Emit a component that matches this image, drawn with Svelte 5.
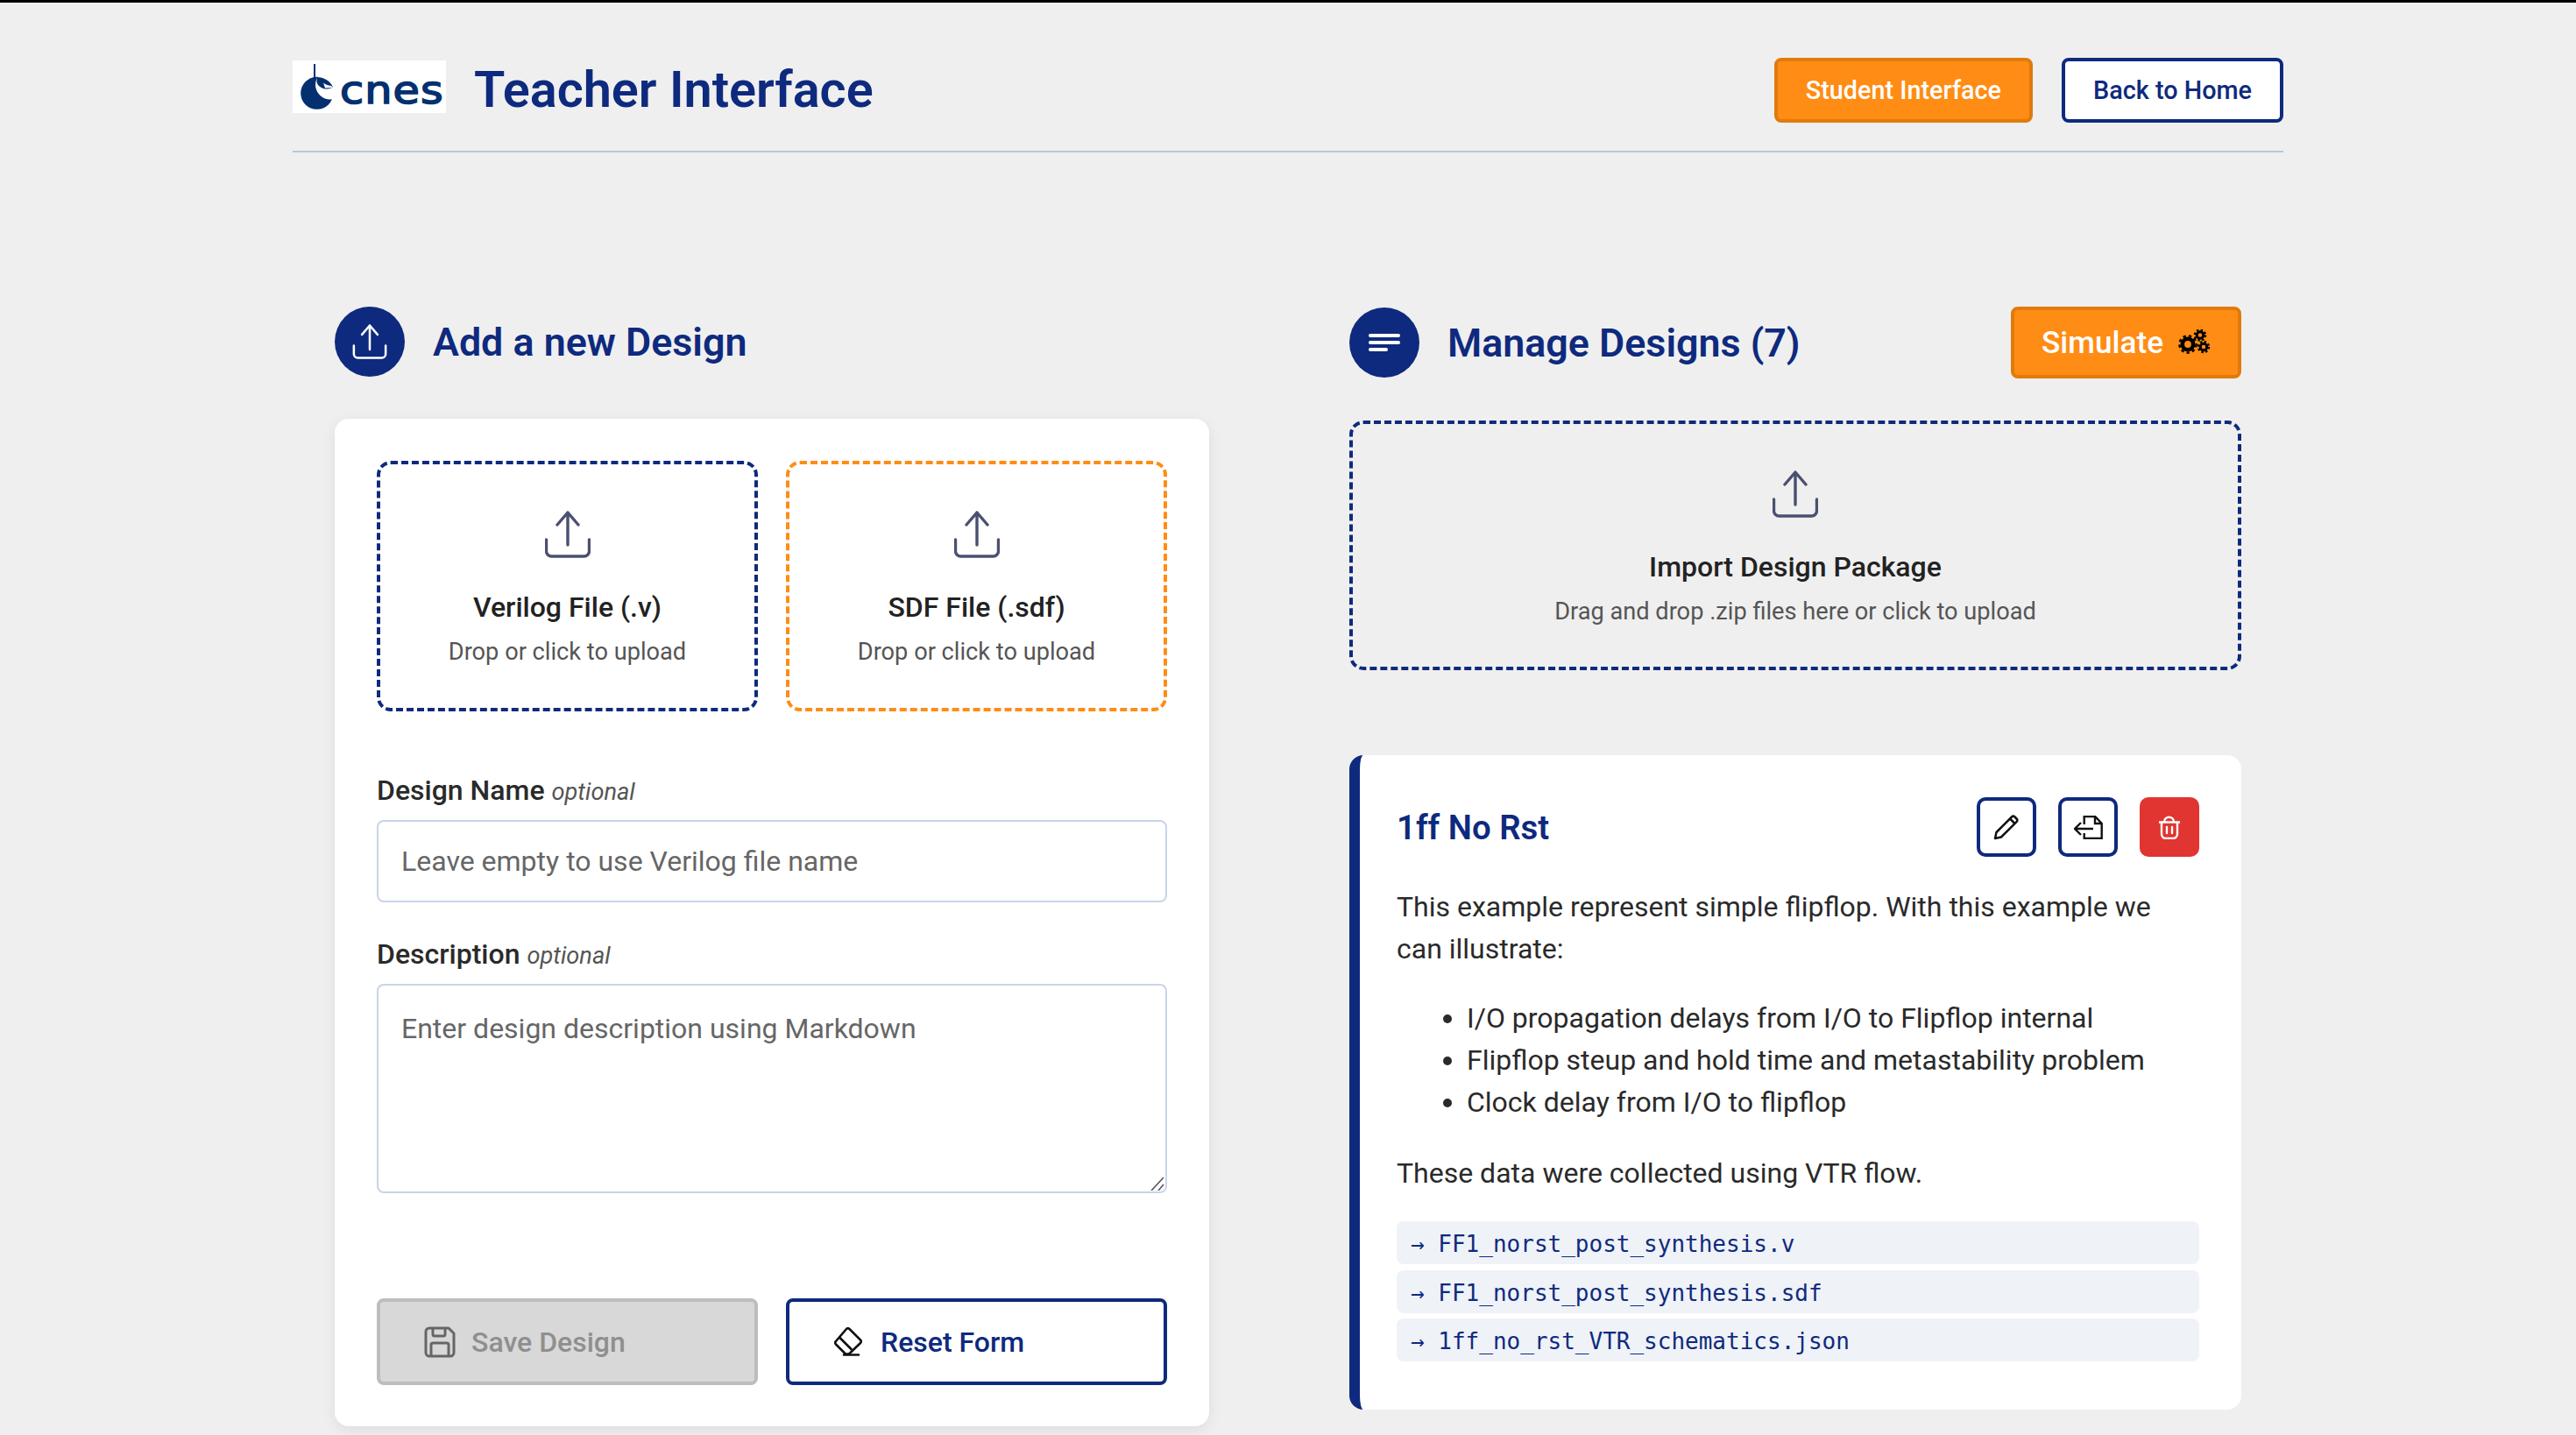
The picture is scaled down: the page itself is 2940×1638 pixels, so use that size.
<script>
  const gears = [
    { cx: 12, cy: 17, r: 6.2, sw: 4.6, tr: 9.6, dash: '3.4 3.15' },
    { cx: 26, cy: 6.5, r: 3.8, sw: 3, tr: 6, dash: '2.4 2.3' },
    { cx: 30, cy: 20, r: 3.8, sw: 3, tr: 6, dash: '2.4 2.3' }
  ];
  const files = ['FF1_norst_post_synthesis.v', 'FF1_norst_post_synthesis.sdf', '1ff_no_rst_VTR_schematics.json'];
  const points = [
    'I/O propagation delays from I/O to Flipflop internal',
    'Flipflop steup and hold time and metastability problem',
    'Clock delay from I/O to flipflop'
  ];
</script>

{#snippet upload(cls)}
  <svg class={cls} viewBox="0 0 52 54" fill="none" stroke="currentColor" stroke-width="3.4" stroke-linecap="round" stroke-linejoin="round">
    <path d="M1.5 33v13a6 6 0 0 0 6 6h37a6 6 0 0 0 6-6V33" />
    <path d="M26 2v37M14 16 26 2l12 14" />
  </svg>
{/snippet}

<div class="page">
  <header class="top">
    <div class="brand">
      <div class="logo">
        <svg class="mark" viewBox="0 0 50 60">
          <circle cx="27.7" cy="37.3" r="18.5" fill="#04306f" />
          <circle cx="42.7" cy="27.7" r="16.7" fill="#fff" />
          <path d="M27.5 19c8 0 15 4 18.500 11.500-4 2.300-8 2.500-11 1.500-4-1.500-7-4-7.500-8z" fill="#04306f" />
          <path d="M35 25.500c2 1.800 5 3 9 3.500l2 2-9 .5z" fill="#fff" />
          <rect x="24" y="4" width="2" height="34" fill="#04306f" />
        </svg>
        <span class="wordmark">cnes</span>
      </div>
      <h1>Teacher Interface</h1>
    </div>
    <nav class="top-actions">
      <button class="btn orange">Student Interface</button>
      <button class="btn outline">Back to Home</button>
    </nav>
  </header>

  <main class="columns">
    <section class="left">
      <div class="section-head">
        <span class="circle">{@render upload('circle-upload')}</span>
        <h2>Add a new Design</h2>
      </div>
      <form class="card">
        <div class="zones">
          <div class="zone navy">
            {@render upload('zone-icon')}
            <strong>Verilog File (.v)</strong>
            <span>Drop or click to upload</span>
          </div>
          <div class="zone amber">
            {@render upload('zone-icon')}
            <strong>SDF File (.sdf)</strong>
            <span>Drop or click to upload</span>
          </div>
        </div>

        <label class="field-label first" for="name">Design Name <em>optional</em></label>
        <input id="name" type="text" placeholder="Leave empty to use Verilog file name" />

        <label class="field-label second" for="desc">Description <em>optional</em></label>
        <div class="area-wrap">
          <textarea id="desc" placeholder="Enter design description using Markdown"></textarea>
          <svg class="grip" viewBox="0 0 16 16" fill="none" stroke="#555" stroke-width="1.600">
            <path d="M1 16 15 1M9 16l6-7" />
          </svg>
        </div>

        <div class="form-actions">
          <button type="button" class="form-btn save">
            <svg class="save-icon" viewBox="0 0 36 36" fill="none" stroke="#666" stroke-width="3" stroke-linejoin="round">
              <path d="M2 6a4 4 0 0 1 4-4h22l6 6v22a4 4 0 0 1-4 4H6a4 4 0 0 1-4-4z" />
              <path d="M10 2v7a2 2 0 0 0 2 2h10a2 2 0 0 0 2-2V2M8 34V21a2 2 0 0 1 2-2h16a2 2 0 0 1 2 2v13" />
            </svg>
            Save Design
          </button>
          <button type="button" class="form-btn reset">
            <svg class="reset-icon" viewBox="0 0 32 33" fill="none" stroke="#111" stroke-width="2.600" stroke-linejoin="round" stroke-linecap="round">
              <path d="M17.500 2 30 14.500a2.500 2.500 0 0 1 0 3.500L17 30.500H13L2 19.500a2.500 2.500 0 0 1 0-3.500L14 2a2.500 2.500 0 0 1 3.500 0z" />
              <path d="M6.500 12 19.500 25M11 31.500h17" />
            </svg>
            Reset Form
          </button>
        </div>
      </form>
    </section>

    <section class="right">
      <div class="section-head manage">
        <span class="circle">
          <svg class="lines" viewBox="0 0 36 20" fill="none" stroke="#fff" stroke-width="4" stroke-linecap="round">
            <path d="M2 2h32M2 10h32M2 18h18" />
          </svg>
        </span>
        <h2>Manage Designs (7)</h2>
        <button class="btn orange simulate">
          Simulate
          <svg class="gears" viewBox="0 0 38 30">
            {#each gears as g}
              <circle cx={g.cx} cy={g.cy} r={g.r} fill="none" stroke="#000" stroke-width={g.sw} />
              <circle cx={g.cx} cy={g.cy} r={g.tr} fill="none" stroke="#000" stroke-width="2.400" stroke-dasharray={g.dash} />
            {/each}
          </svg>
        </button>
      </div>

      <div class="zone navy import">
        {@render upload('zone-icon')}
        <strong>Import Design Package</strong>
        <span>Drag and drop .zip files here or click to upload</span>
      </div>

      <article class="design">
        <div class="design-head">
          <h3>1ff No Rst</h3>
          <div class="icon-btns">
            <button class="icon-btn" aria-label="Edit">
              <svg class="i-pencil" viewBox="0 0 30 30" fill="none" stroke="#111" stroke-width="2.500" stroke-linejoin="round">
                <path d="M2 28l1.500-7L21 3.500a2.500 2.500 0 0 1 3.500 0l2 2a2.500 2.500 0 0 1 0 3.500L9 26.500z" />
                <path d="M19 5.500 24.500 11" />
              </svg>
            </button>
            <button class="icon-btn" aria-label="Export">
              <svg class="i-file" viewBox="0 0 33 27" fill="none" stroke="#111" stroke-width="2.400">
                <path d="M11.700 10V1h12.500l7.500 8v17H11.700v-6M24 1v8h7.700" />
                <path d="M22 15H1M8 8l-7 7 7 7" />
              </svg>
            </button>
            <button class="icon-btn danger" aria-label="Delete">
              <svg class="i-trash" viewBox="0 0 24 27" fill="none" stroke="#fff" stroke-width="2.400" stroke-linecap="round">
                <path d="M0 7.500h24M6 7c0-7 11-7 11 0M3 7.500V21a5 5 0 0 0 5 5h8a5 5 0 0 0 5-5V7.500M9 13v7M15 13v7" />
              </svg>
            </button>
          </div>
        </div>
        <p>This example represent simple flipflop. With this example we can illustrate:</p>
        <ul>
          {#each points as point}
            <li>{point}</li>
          {/each}
        </ul>
        <p>These data were collected using VTR flow.</p>
        <div class="files">
          {#each files as file}
            <div class="file">→ {file}</div>
          {/each}
        </div>
      </article>
    </section>
  </main>
</div>

<style>
  :global(html), :global(body) {
    margin: 0;
    height: 1638px;
    overflow: hidden;
    background: #efefef;
  }
  .page {
    --navy: #0e2a7e;
    --orange: #ff8c14;
    box-sizing: border-box;
    height: 1638px;
    border-top: 3px solid #000;
    font-family: Roboto, "Liberation Sans", sans-serif;
    color: #2a2a2a;
  }
  .top {
    box-sizing: border-box;
    width: 2272px;
    margin: 0 auto;
    padding: 63px 0 32px;
    display: flex;
    align-items: center;
    justify-content: space-between;
    border-bottom: 2px solid #b8c4dc;
  }
  .brand { display: flex; align-items: center; gap: 32px; }
  .logo {
    width: 175px;
    height: 60px;
    background: #fff;
    display: flex;
    align-items: flex-start;
    overflow: hidden;
    align-self: flex-start;
    margin-top: 3px;
  }
  .mark { width: 50px; height: 60px; flex: none; }
  .wordmark {
    font: 400 44px/52px "DejaVu Sans", sans-serif;
    color: #04306f;
    -webkit-text-stroke: 1.6px #04306f;
    letter-spacing: 1px;
    margin: 8px 0 0 4px;
    transform: scaleX(1.12);
    transform-origin: left center;
  }
  h1 { margin: 0; font-size: 57.6px; font-weight: 600; color: var(--navy); line-height: 74px; }
  .top-actions { display: flex; gap: 33px; }
  .btn {
    box-sizing: border-box;
    height: 74px;
    padding: 0 32px;
    border: 4px solid;
    border-radius: 8px;
    font: 500 28.8px Roboto, sans-serif;
  }
  .orange { background: var(--orange); border-color: #e07b0a; color: #fff; }
  .outline { background: #fff; border-color: var(--navy); color: var(--navy); }

  .columns {
    width: 2176px;
    margin: 176px auto 0;
    display: grid;
    grid-template-columns: 998px 1018px;
    column-gap: 160px;
    align-items: start;
  }
  .section-head { display: flex; align-items: center; gap: 32px; margin-bottom: 48px; }
  .circle {
    width: 80px;
    height: 80px;
    border-radius: 50%;
    background: var(--navy);
    color: #fff;
    flex: none;
    display: flex;
    align-items: center;
    justify-content: center;
  }
  .circle-upload { width: 40px; height: 40px; }
  .lines { width: 36px; height: 20px; }
  h2 { margin: 0; font-size: 44.8px; font-weight: 600; color: var(--navy); line-height: 58px; padding-top: 2px; }
  .manage h2 { flex: 1; }
  .simulate {
    width: 263px;
    height: 82px;
    padding: 0;
    font-size: 35.2px;
    display: flex;
    align-items: center;
    justify-content: center;
    gap: 16px;
  }
  .gears { width: 38px; height: 30px; }

  .card {
    box-sizing: border-box;
    height: 1150px;
    padding: 48px;
    background: #fff;
    border-radius: 16px;
    box-shadow: 0 4px 16px rgba(0, 0, 0, 0.08);
    display: flex;
    flex-direction: column;
  }
  .zones { display: grid; grid-template-columns: 1fr 1fr; gap: 32px; }
  .zone {
    box-sizing: border-box;
    height: 286px;
    border: 4px dashed;
    border-radius: 16px;
    display: flex;
    flex-direction: column;
    align-items: center;
    padding-top: 53px;
    background: #fff;
  }
  .zone.navy { border-color: var(--navy); }
  .zone.amber { border-color: var(--orange); }
  .zone-icon { width: 52px; height: 54px; color: #4a5070; }
  .zone strong { font-size: 32px; font-weight: 500; line-height: 48px; margin-top: 32px; color: #222; }
  .zone span { font-size: 27.2px; line-height: 40px; margin-top: 7px; color: #555; }
  .import { height: 285px; background: transparent; }

  .field-label { height: 48px; flex: none; font-size: 32px; font-weight: 500; line-height: 48px; color: #2a2a2a; margin-bottom: 10px; }
  .field-label.first { margin-top: 66px; }
  .field-label.second { margin-top: 35px; margin-bottom: 10px; }
  .field-label em { font-size: 27.2px; font-weight: 400; color: #555; }
  input, textarea {
    box-sizing: border-box;
    width: 100%;
    border: 2px solid #c8d4e8;
    border-radius: 8px;
    padding: 0 26px;
    font: 400 32px Roboto, sans-serif;
    color: #333;
    background: #fff;
    outline: none;
    display: block;
  }
  input { height: 94px; flex: none; }
  .area-wrap { position: relative; flex: none; height: 239px; }
  textarea { height: 239px; padding-top: 30px; resize: none; }
  .grip { position: absolute; right: 3px; bottom: 3px; width: 16px; height: 16px; }
  input::placeholder, textarea::placeholder { color: #666; opacity: 1; }
  .form-actions { display: grid; grid-template-columns: 1fr 1fr; gap: 32px; margin-top: 120px; }
  .form-btn {
    box-sizing: border-box;
    height: 99px;
    border: 4px solid;
    border-radius: 8px;
    padding: 0 50px;
    display: flex;
    align-items: center;
    gap: 18px;
    font: 500 32px Roboto, sans-serif;
  }
  .save { background: #d8d8d8; border-color: #bdbdbd; color: #8f8f8f; }
  .reset { background: #fff; border-color: var(--navy); color: var(--navy); padding-left: 51px; gap: 21px; }
  .save-icon { width: 36px; height: 36px; }
  .reset-icon { width: 32px; height: 33px; }

  .design {
    box-sizing: border-box;
    height: 747px;
    margin-top: 97px;
    padding: 48px 48px 0 42px;
    background: #fff;
    border-left: 12px solid var(--navy);
    border-radius: 16px;
  }
  .design-head { display: flex; align-items: center; justify-content: space-between; margin-bottom: 33px; }
  h3 { margin: 0; font-size: 38.4px; font-weight: 600; color: var(--navy); }
  .icon-btns { display: flex; gap: 25px; }
  .icon-btn {
    box-sizing: border-box;
    width: 68px;
    height: 68px;
    padding: 0;
    border: 4px solid var(--navy);
    border-radius: 10px;
    background: #fff;
    display: flex;
    align-items: center;
    justify-content: center;
  }
  .icon-btn.danger { background: #e03530; border-color: #e03530; }
  .i-pencil { width: 30px; height: 30px; }
  .i-file { width: 33px; height: 27px; }
  .i-trash { width: 24px; height: 27px; }
  .design p { margin: 0; font-size: 32px; line-height: 48px; color: #2a2a2a; }
  .design ul { margin: 31px 0 33px; padding-left: 80px; font-size: 32px; line-height: 48px; }
  .files { margin-top: 31px; display: flex; flex-direction: column; gap: 6.500px; }
  .file {
    height: 49px;
    padding-left: 16px;
    border-radius: 8px;
    background: #eff2f7;
    font: 400 26px/52px "DejaVu Sans Mono", monospace;
    color: var(--navy);
  }
</style>
